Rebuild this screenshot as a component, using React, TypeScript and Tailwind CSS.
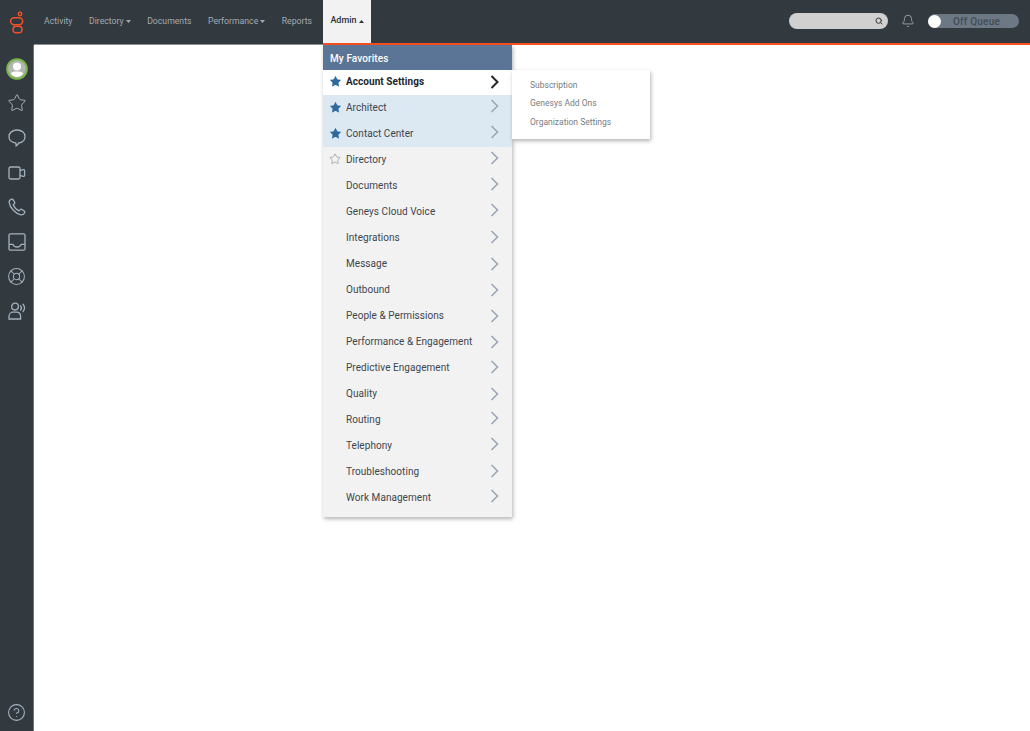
import React from 'react';
import { Star, LifeBuoy, Bell, Search, CircleHelp } from 'lucide-react';

const navItems = [
  { label: 'Activity' },
  { label: 'Directory', caret: true },
  { label: 'Documents' },
  { label: 'Performance', caret: true },
  { label: 'Reports' },
];

const menuItems = [
  { label: 'Account Settings', star: 'filled', active: true, chevron: 0 },
  { label: 'Architect', star: 'filled', fav: true, chevron: -1 },
  { label: 'Contact Center', star: 'filled', fav: true, chevron: -1 },
  { label: 'Directory', star: 'outline', chevron: -1 },
  { label: 'Documents', chevron: -1 },
  { label: 'Geneys Cloud Voice', chevron: -1 },
  { label: 'Integrations', chevron: 0 },
  { label: 'Message', chevron: 1 },
  { label: 'Outbound', chevron: 1 },
  { label: 'People & Permissions', chevron: 1 },
  { label: 'Performance & Engagement', chevron: 1 },
  { label: 'Predictive Engagement', chevron: 0 },
  { label: 'Quality', chevron: 1 },
  { label: 'Routing', chevron: -1 },
  { label: 'Telephony', chevron: -1 },
  { label: 'Troubleshooting', chevron: 0 },
  { label: 'Work Management', chevron: -1 },
];

const subItems = ['Subscription', 'Genesys Add Ons', 'Organization Settings'];

const Caret = ({ up, color }: { up?: boolean; color: string }) => (
  <svg width="5" height="3" viewBox="0 0 5 3" className="ml-[2px]">
    <path d={up ? 'M0 3 L2.5 0 L5 3 Z' : 'M0 0 L2.5 3 L5 0 Z'} fill={color} />
  </svg>
);

const GenesysLogo = () => (
  <svg width="18" height="24" viewBox="0 0 18 24" fill="none" stroke="#f0512b" strokeWidth="1.5">
    <circle cx="12" cy="3" r="1.7" />
    <rect x="2.6" y="6.8" width="12" height="7" rx="3.5" />
    <rect x="5" y="15.2" width="9" height="6.6" rx="3.3" />
  </svg>
);

const Chevron = ({ color, offset, bold }: { color: string; offset: number; bold?: boolean }) => (
  <svg
    width="9"
    height="14"
    viewBox="0 0 9 14"
    fill="none"
    stroke={color}
    strokeWidth={bold ? 2 : 1.6}
    className="ml-auto mr-[13px]"
    style={{ marginTop: offset * 2 }}
  >
    <path d="M1.5 1 L7.5 7 L1.5 13" />
  </svg>
);

const Avatar = () => (
  <svg width="22" height="22" viewBox="0 0 22 22">
    <circle cx="11" cy="11" r="9.8" fill="#b4b4b4" stroke="#7ab648" strokeWidth="2" />
    <circle cx="11" cy="8.6" r="4" fill="#ffffff" />
    <path d="M4.8 15.6 C6 13.6 8.4 13.4 11 13.4 C13.6 13.4 16 13.6 17.2 15.6 C15.6 18 13.4 19 11 19 C8.6 19 6.4 18 4.8 15.6 Z" fill="#ffffff" />
  </svg>
);

const ChatIcon = () => (
  <svg width="18" height="18" viewBox="0 0 18 18" fill="none" stroke="currentColor" strokeWidth="1.3" strokeLinejoin="round">
    <path d="M9 1 C13.6 1 17 3.6 17 7.5 C17 11.4 14 13.6 10.6 14 C10.2 15.2 9.2 16.4 8 17 C8.2 16 8.2 15 7.8 14 C3.8 13.6 1 11.2 1 7.6 C1 3.8 4.4 1 9 1 Z" />
  </svg>
);

const VideoIcon = () => (
  <svg width="18" height="18" viewBox="0 0 18 18" fill="none" stroke="currentColor" strokeWidth="1.3" strokeLinejoin="round">
    <rect x="1" y="3" width="11" height="12" rx="1.5" />
    <path d="M12 6.6 L15 5.6 C16 5.4 16.6 5.8 16.6 6.6 V11.4 C16.6 12.2 16 12.6 15 12.4 L12 11.4" />
  </svg>
);

const PhoneIcon = () => (
  <svg width="18" height="18" viewBox="0 0 18 18" fill="none" stroke="currentColor" strokeWidth="1.3" strokeLinejoin="round">
    <path d="M3.6 1.2 C2 1.8 1 3 1.2 4.6 C2 9.8 7.4 15.8 13 16.8 C14.8 17 16.2 16 16.8 14.6 C17 14 16.8 13.4 16.2 13 L13.6 11.4 C13 11 12.4 11.2 12 11.6 L11 12.8 C8.6 11.8 6.2 9.2 5.2 6.8 L6.4 5.8 C6.9 5.4 7 4.8 6.6 4.2 L5 1.6 C4.7 1.1 4.1 1 3.6 1.2 Z" />
  </svg>
);

const TrayIcon = () => (
  <svg width="18" height="18" viewBox="0 0 18 18" fill="none" stroke="currentColor" strokeWidth="1.3" strokeLinejoin="round">
    <rect x="1" y="0.8" width="16" height="16.4" rx="1.5" />
    <path d="M1 11.4 H5 C5.6 13 7 14 9 14 C11 14 12.4 13 13 11.4 H17" />
  </svg>
);

// person with sound waves
const AgentIcon = () => (
  <svg width="18" height="18" viewBox="0 0 18 18" fill="none" stroke="currentColor" strokeWidth="1.3" strokeLinecap="round">
    <circle cx="7" cy="4.6" r="3.4" />
    <path d="M1 17 V14.6 C1 11.8 3 10.2 5 10.2 H8.6 C10.8 10.2 12.6 11.8 12.6 14.6 V17 Z" />
    <path d="M12.6 3.8 C13.6 5 13.6 6.8 12.6 8" />
    <path d="M15 2.2 C16.8 4.4 16.8 7.4 15 9.6" />
  </svg>
);

export default function App() {
  return (
    <div className="relative w-[1030px] h-[731px] overflow-hidden bg-white font-['Roboto',sans-serif]">
      {/* Top bar */}
      <header className="flex h-[45px] bg-[#32393f]">
        <div className="flex w-[323px] h-full">
          <div className="w-[34px] flex items-center justify-center">
            <GenesysLogo />
          </div>
          <nav className="flex-1 flex items-center gap-[16.5px] pl-[10px] border-b border-[#8b9094] text-[8.7px] text-[#a3abb1]">
            {navItems.map((item) => (
              <span key={item.label} className="flex items-center">
                {item.label}
                {item.caret && <Caret color="#a3abb1" />}
              </span>
            ))}
          </nav>
        </div>
        <div className="flex-1 flex items-stretch h-full border-b-2 border-[#f9501f]">
          <div className="flex items-center justify-center w-[48px] bg-[#f2f2f2] text-[9px] font-medium text-[#2e3338] pb-[1px]">
            Admin
            <Caret up color="#2e3338" />
          </div>
          <div className="flex items-center ml-auto pr-[11px] pb-[1px]">
            <div className="flex items-center justify-end w-[99px] h-[16px] rounded-full bg-[#d0d0d0] pr-[5px]">
              <Search size={8} strokeWidth={3} className="text-[#32393f]" />
            </div>
            <Bell size={14} strokeWidth={1.4} className="ml-[13px] text-[#a3b1bd]" />
            <div className="flex items-center ml-[13px] w-[91px] h-[14px] rounded-full bg-[#6c7884]">
              <div className="w-[13px] h-[13px] rounded-full bg-white" />
              <span className="ml-[12px] text-[10px] font-medium tracking-[0.2px] text-[#434c55]">Off Queue</span>
            </div>
          </div>
        </div>
      </header>

      <div className="flex h-[686px]">
        {/* Left rail */}
        <aside className="flex flex-col items-center w-[34px] h-full bg-[#32393f] border-r border-[#6d7378] pt-[13px] pb-[9px]">
          <Avatar />
          <div className="flex flex-col items-center mt-[6px] text-[#a3b1bd]">
            {[
              <Star key="star" size={20} strokeWidth={1.2} />,
              <ChatIcon key="chat" />,
              <VideoIcon key="video" />,
              <PhoneIcon key="phone" />,
              <TrayIcon key="tray" />,
              <LifeBuoy key="buoy" size={19} strokeWidth={1.3} />,
              <AgentIcon key="agent" />,
            ].map((icon) => (
              <div key={icon.key} className="flex items-center justify-center h-[34.7px]">
                {icon}
              </div>
            ))}
          </div>
          <CircleHelp size={19} strokeWidth={1.4} className="mt-auto text-[#a3b1bd]" />
        </aside>
        <main className="flex-1 bg-white" />
      </div>

      {/* Admin dropdown */}
      <div className="absolute left-[323px] top-[45px] w-[189px] bg-[#f2f2f2] shadow-[1px_2px_4px_rgba(0,0,0,0.3)] pb-[6px]">
        <div className="flex items-center h-[25px] pl-[7px] pt-[2px] bg-[#5a7596] text-[10px] font-medium tracking-[0.1px] text-white">
          My Favorites
        </div>
        {menuItems.map((item, i) => (
          <div
            key={item.label}
            className={`flex items-center pb-[2px] ${i === 0 ? 'h-[25px]' : 'h-[26px]'} ${item.active ? 'bg-white' : item.fav ? 'bg-[#dce8f2]' : ''}`}
          >
            <div className="flex items-center justify-center w-[23px] pl-[1px]">
              {item.star === 'filled' && <Star size={13} fill="#2f6a9c" strokeWidth={0} />}
              {item.star === 'outline' && <Star size={12} strokeWidth={1.1} className="text-[#6f7a85]" />}
            </div>
            <span className={`text-[10px] tracking-[0.05px] ${item.active ? 'font-bold text-[#22272b]' : 'text-[#3e464d]'}`}>
              {item.label}
            </span>
            <Chevron color={item.active ? '#22272b' : '#9aa7b5'} offset={item.chevron} bold={item.active} />
          </div>
        ))}
      </div>

      {/* Fly-out */}
      <div className="absolute left-[512px] top-[70px] flex flex-col w-[138px] h-[69px] pt-[5.5px] pl-[18px] bg-white shadow-[1px_2px_4px_rgba(0,0,0,0.3)] text-[8.5px] text-[#777d83]">
        {subItems.map((s) => (
          <div key={s} className="flex items-center h-[18.9px]">
            {s}
          </div>
        ))}
      </div>
    </div>
  );
}
